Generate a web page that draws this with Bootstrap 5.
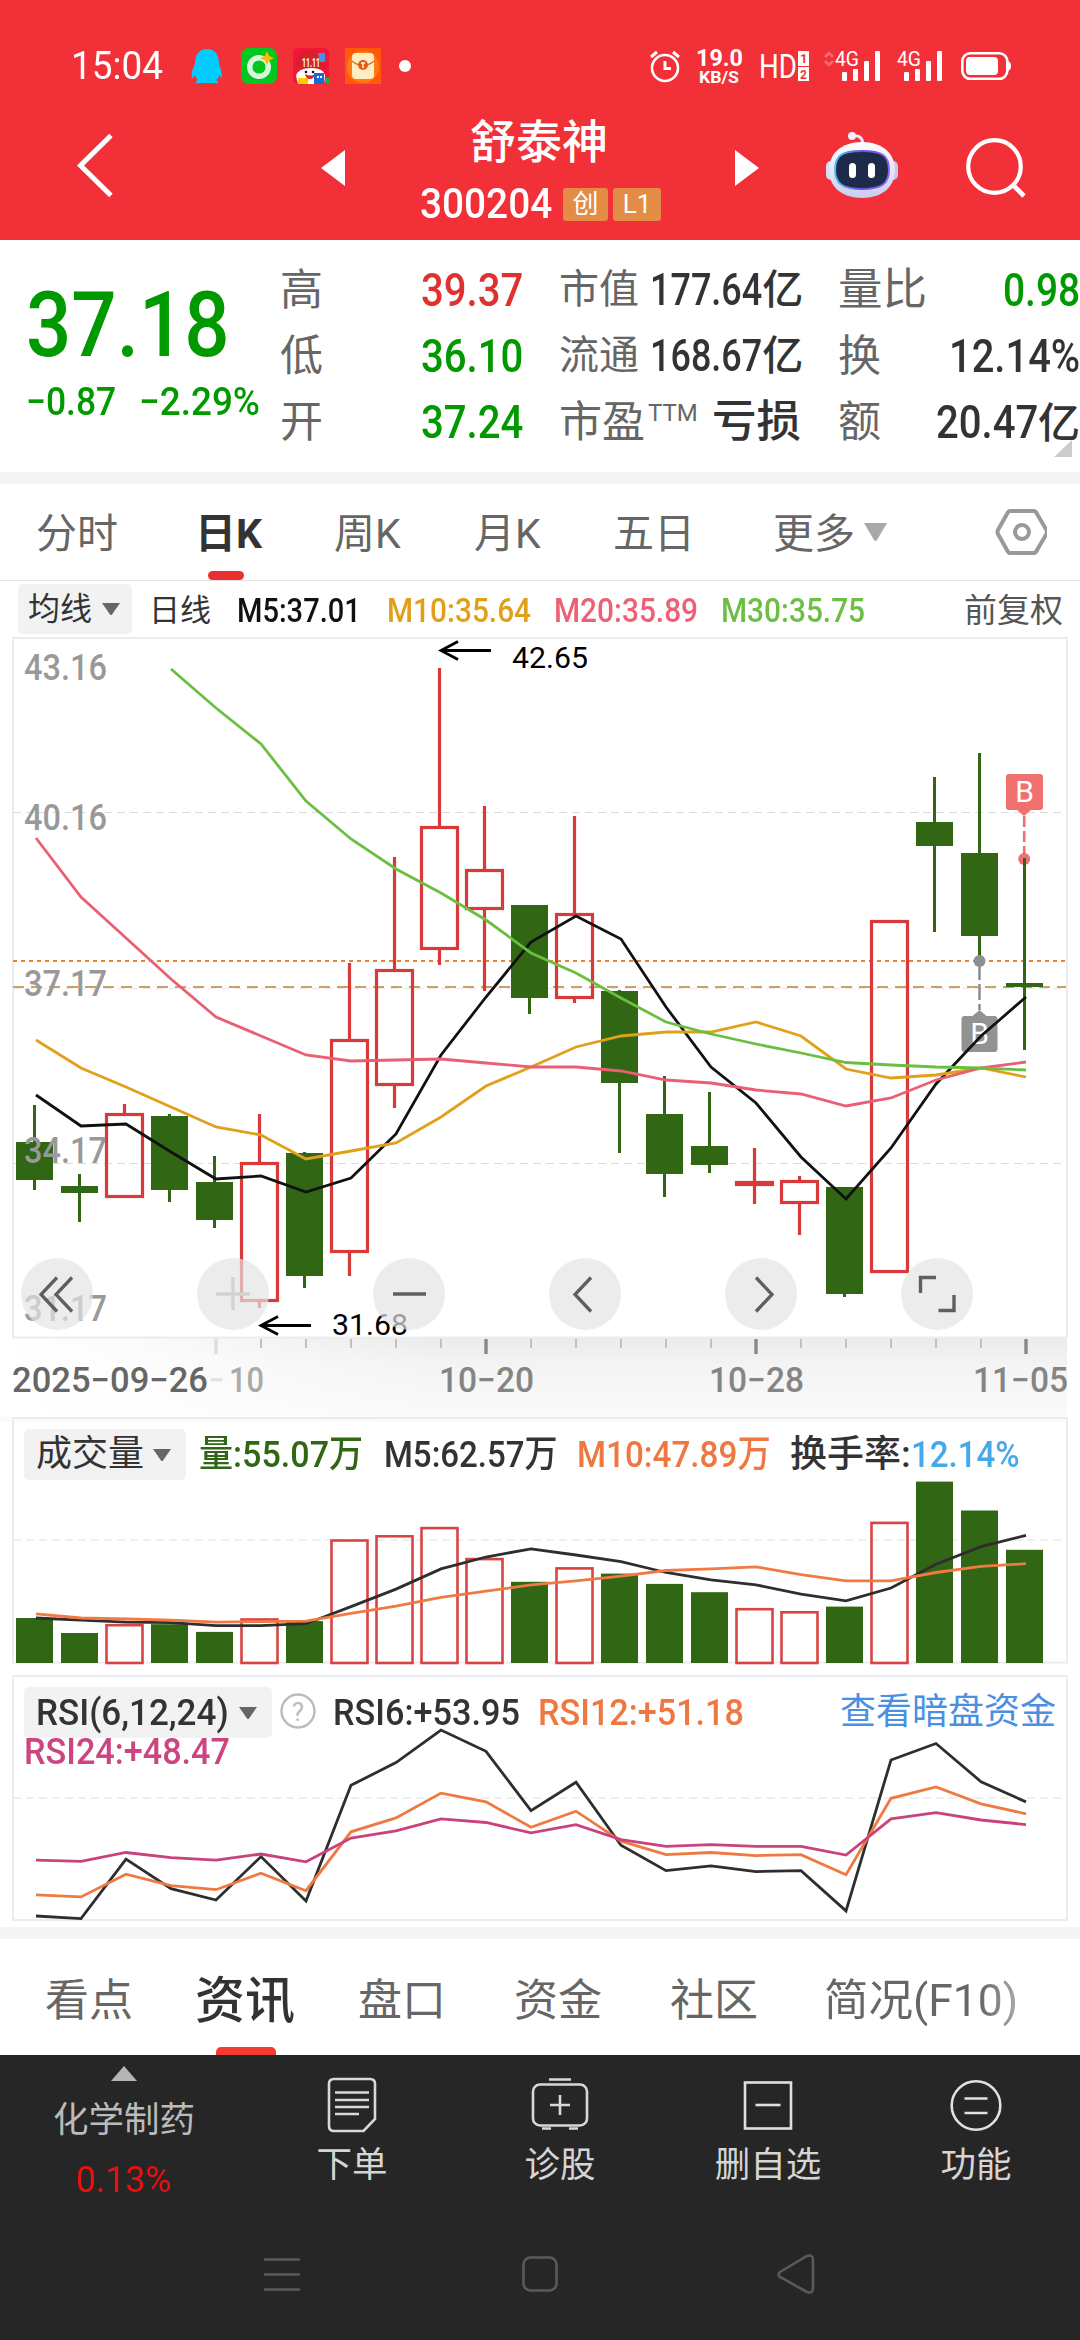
<!DOCTYPE html>
<html lang="zh-CN">
<head>
<meta charset="utf-8">
<meta name="viewport" content="width=device-width, initial-scale=1">
<title>舒泰神 300204</title>
<link href="https://cdn.jsdelivr.net/npm/bootstrap@5.3.0/dist/css/bootstrap.min.css" rel="stylesheet">
<style>
:root{--up:#e03131;--down:#009900;--ink:#333;--muted:#666}
body{width:1080px;height:2340px;overflow:hidden;background:#fff;color:var(--ink);font-family:Roboto,"Noto Sans CJK SC",sans-serif;line-height:1}
svg{display:block;flex:none}
.fit{display:inline-block;white-space:nowrap;transform-origin:0 50%;font-weight:500}
.hd{height:240px;background:#f23038;color:#fff}
.status-bar{height:96px;padding:38px 0 0 71px}
.status-time{font-size:39px;width:120px}
.title-bar{height:144px;display:grid;grid-template-columns:321px 99px 315px 90px 140px 1fr;align-items:start}
.stock-name{font-size:46px;font-weight:500;height:46px;line-height:46px}
.code-line{height:34px;gap:5px}
.code-num{font-size:42px}
.tag{height:33px;line-height:33px;background:#e38c46;border-radius:3px;font-size:26px;text-align:center}
.quote{height:232px;display:grid;grid-template-columns:280px 279px 279px 242px;padding-top:16px}
.last-price{font-size:90px;color:var(--down);height:90px;line-height:90px;margin-top:25px}
.chg{font-size:39px;color:var(--down);height:40px;line-height:40px;margin-top:11px}
.qrow{height:66px;line-height:68px;font-size:43px;color:var(--muted)}
.qrow b{font-weight:500;color:var(--ink)}
.qrow .fit{font-size:46px;color:var(--ink)}
.qrow .g{color:var(--down)} .qrow .r{color:var(--up)}
.band{background:#f4f4f4}
.tabs{height:97px;border-bottom:1px solid #e4e4e4;display:grid;grid-template-columns:159px 139px 140px 139px 160px 90px 132px 1fr;padding-left:36px;font-size:41px;color:var(--muted);line-height:100px}
.tabs .on{color:var(--ink);font-weight:700}
.underbar{position:absolute;height:9px;background:#e83030;border-radius:5px}
.ma-row{height:56px;display:grid;grid-template-columns:131px 90px 149px 167px 167px 242px 1fr;padding-left:18px;font-size:32px;line-height:59px}
.ma-row .fit{font-size:34px}
.pill{background:#f2f2f2;border-radius:5px;color:var(--ink)}
.panel{position:relative}
.overlay-row{position:absolute;left:0;width:1080px}
.round-btn{width:72px;height:72px;border-radius:50%;background:rgba(227,227,227,.69);display:block}
.vol-row{top:12px;height:48px;display:grid;grid-template-columns:175px 186px 192px 212px 1fr;padding-left:24px;font-size:37px;line-height:51px}
.rsi-row{top:16px;height:48px;display:grid;grid-template-columns:256px 53px 204px 303px 1fr;padding-left:24px;font-size:37px;line-height:51px}
.subtabs{height:116px;display:grid;grid-template-columns:150px 163px 156px 155px 155px 1fr;padding-left:45px;font-size:44px;color:var(--muted);line-height:125px}
.subtabs .on{font-size:50px;font-weight:500;color:var(--ink)}
.fade-end{background:linear-gradient(90deg,#666 80%,#aaa);-webkit-background-clip:text;color:transparent}
.dock{background:#262626;height:285px;color:#d5d5d5;font-size:35.500px}
.dock-items{height:175px;display:grid;grid-template-columns:248px 208px 208px 208px 208px}
.dock-items>div{display:flex;flex-direction:column;align-items:center}
.dock-lab{line-height:40px;height:40px}
</style>
</head>
<body>
<header class="hd">
  <div class="status-bar d-flex align-items-start">
    <span class="status-time"><span class="fit" data-w="92" style="font-weight:400;line-height:56px">15:04</span></span>
    <svg width="889" height="56" viewBox="191 38 889 56">
      <path d="M207 49c-9 0-12 7-12 15-3 5-4 11-3 14 1 0 2-1 3-3 0 2 2 4 3 5-4 2-2 4 1 3h15c4 1 6-1 2-3 2-1 3-3 3-5 1 2 3 3 3 3 0-4-1-9-3-14 0-8-3-15-12-15z" fill="#0cf"/>
      <rect x="241" y="48" width="36" height="36" rx="8" fill="#00c81e"/><circle cx="259" cy="67" r="9.3" fill="none" stroke="#d9f7dd" stroke-width="5.4"/><path d="M267 53l1.700 3.500 3.500 1.700-3.500 1.700-1.700 3.500-1.700-3.500-3.500-1.700 3.500-1.700z" fill="#fb0" stroke="#fb0" stroke-width="1.500"/>
      <rect x="293" y="48" width="36" height="36" rx="5" fill="#f5143c"/><path d="M297 59q2-9 14-9 11 0 13 9l2 10h-31z" fill="#d8202c"/><path d="M318 53h7v9h-5z" fill="#4a90e8"/><path d="M296 76q2-8 15-8 13 0 14 8l-1 8h-26z" fill="#fff"/><text x="302" y="67" font-size="12" font-weight="700" fill="#fff" textLength="18" lengthAdjust="spacingAndGlyphs">11.11</text><path d="M305 74q6 3 10 0-1 5-5 5t-5-5z" fill="#e02020"/><circle cx="306" cy="72" r="1.300" fill="#111"/><circle cx="313" cy="72" r="1.300" fill="#111"/><path d="M298 78h10v6h-10z" fill="#fc0"/><path d="M314 73h10v11h-10z" fill="#1769d8"/><path d="M317 76h2v2h-2zM320 76h2v2h-2z" fill="#fff"/><path d="M325 78h4v5h-4z" fill="#20b040"/>
      <rect x="345" y="48" width="36" height="36" fill="#ff5a0a"/><circle cx="363" cy="67" r="16" fill="#ff7a10"/><rect x="352" y="53" width="22" height="26" rx="4" fill="#ffeec2"/><path d="M352 61q11 9 22 0" fill="none" stroke="#d86820" stroke-width="1.400"/><circle cx="363" cy="65" r="5" fill="#e85a10"/><path d="M361 63h4M363 63v5" stroke="#fff" stroke-width="1.600"/>
      <circle cx="405" cy="66" r="6" fill="#fff"/>
      <g fill="none" stroke="#fff" stroke-width="2.600"><circle cx="665" cy="68" r="13"/><path d="M665 61v7.500h6M651 57l6-5M679 57l-6-5" stroke-width="3"/></g>
      <g fill="#fff" font-weight="700"><text x="696" y="66" font-size="24" textLength="47" lengthAdjust="spacingAndGlyphs">19.0</text><text x="699" y="83" font-size="17" textLength="40" lengthAdjust="spacingAndGlyphs">KB/S</text></g>
      <text x="759" y="78" font-size="33" fill="#fff" textLength="38" lengthAdjust="spacingAndGlyphs">HD</text>
      <rect x="798" y="51" width="11" height="15" fill="#fff"/><rect x="798" y="67" width="11" height="14" fill="#fff"/>
      <text x="800" y="63" font-size="13" font-weight="700" fill="#f23038">1</text><text x="800" y="79" font-size="12" font-weight="700" fill="#f23038">2</text>
      <path d="M825 57l4-4 4 4M825 61l4 4 4-4" fill="none" stroke="#f86a70" stroke-width="2.600"/>
      <g fill="#fff"><text x="835" y="65.500" font-size="20" textLength="24" lengthAdjust="spacingAndGlyphs">4G</text><rect x="842" y="72" width="5" height="9" rx="1"/><rect x="853" y="69" width="5" height="12" rx="1"/><rect x="864" y="61" width="5" height="20" rx="1"/><rect x="875" y="51" width="5" height="30" rx="1"/>
      <text x="897" y="65.500" font-size="20" textLength="24" lengthAdjust="spacingAndGlyphs">4G</text><rect x="904" y="72" width="5" height="9" rx="1"/><rect x="915" y="69" width="5" height="12" rx="1"/><rect x="926" y="61" width="5" height="20" rx="1"/><rect x="937" y="51" width="5" height="30" rx="1"/>
      <rect x="966" y="57" width="32" height="18" rx="4"/><path d="M1008 61q3 1 3 5t-3 5z"/></g>
      <rect x="962.300" y="53.300" width="45" height="25.500" rx="8" fill="none" stroke="#fff" stroke-width="2.600"/>
    </svg>
  </div>
  <div class="title-bar">
    <svg width="240" height="120" viewBox="0 96 240 120"><path d="M111 135.500L80.500 165.500l30.500 30" fill="none" stroke="#fff" stroke-width="5"/></svg>
    <svg width="99" height="120" viewBox="321 96 99 120"><path d="M321 168l24-18v36z" fill="#fff"/></svg>
    <div class="d-flex flex-column" style="padding-top:23px">
      <div class="stock-name" style="padding-left:50px">舒泰神</div>
      <div class="code-line d-flex align-items-center" style="margin-top:22px">
        <span style="width:138px"><span class="fit code-num" data-w="132">300204</span></span>
        <span class="tag" style="width:45px">创</span><span class="tag" style="width:48px">L1</span>
      </div>
    </div>
    <svg width="60" height="120" viewBox="735 96 60 120"><path d="M759 168l-24-18v36z" fill="#fff"/></svg>
    <svg width="76" height="120" viewBox="824 96 76 120">
      <defs><linearGradient id="rb" x1="0" y1="0" x2="0" y2="1"><stop offset="0" stop-color="#fff"/><stop offset="1" stop-color="#c9cdf0"/></linearGradient><linearGradient id="rf" x1="0" y1="0" x2="1" y2="0"><stop offset="0" stop-color="#4cc4ee"/><stop offset=".5" stop-color="#6a50e0"/><stop offset="1" stop-color="#8d62f0"/></linearGradient></defs>
      <path d="M851 136q10-2 11 8" fill="none" stroke="#e8e8fa" stroke-width="3"/><circle cx="851" cy="136" r="4" fill="#eeeefb"/>
      <rect x="825" y="161" width="12" height="19" rx="5" fill="#d9dcf5"/><rect x="885" y="161" width="12" height="19" rx="5" fill="#c3c8ee"/>
      <path d="M861 142c21 0 33 12 33 28 0 17-13 28-33 28s-33-11-33-28c0-16 12-28 33-28z" fill="url(#rb)"/>
      <path d="M861 151c21 0 27 5 27 19s-8 19-27 19-27-5-27-19 6-19 27-19z" fill="#1e2a4a" stroke="url(#rf)" stroke-width="2"/>
      <rect x="848" y="163" width="7" height="15" rx="3.500" fill="#fff"/><rect x="867" y="163" width="7" height="15" rx="3.500" fill="#fff"/>
    </svg>
    <svg width="100" height="120" viewBox="965 96 100 120"><g fill="none" stroke="#fff" stroke-width="4.200"><circle cx="994.500" cy="166.500" r="26.300"/><path d="M1013 185l11 11" stroke-width="4.600"/></g></svg>
  </div>
</header>

<section class="quote position-relative">
  <div style="padding-left:26px">
    <div class="last-price"><span class="fit" data-w="204">37.18</span></div>
    <div class="chg d-flex"><span style="width:113px"><span class="fit" data-w="90">−0.87</span></span><span class="fit" data-w="121">−2.29%</span></div>
  </div>
  <div>
    <div class="qrow d-flex"><span style="width:141px">高</span><span class="fit r" data-w="102">39.37</span></div>
    <div class="qrow d-flex"><span style="width:141px">低</span><span class="fit g" data-w="102">36.10</span></div>
    <div class="qrow d-flex"><span style="width:141px">开</span><span class="fit g" data-w="102">37.24</span></div>
  </div>
  <div>
    <div class="qrow d-flex"><span style="width:91px;font-size:40px">市值</span><span class="fit" data-w="112" style="font-size:44px">177.64</span><b style="font-size:41px">亿</b></div>
    <div class="qrow d-flex"><span style="width:91px;font-size:40px">流通</span><span class="fit" data-w="112" style="font-size:44px">168.67</span><b style="font-size:41px">亿</b></div>
    <div class="qrow d-flex"><span style="width:89px">市盈</span><span style="width:64px;font-size:24px;line-height:51px">TTM</span><b style="font-size:44.500px">亏损</b></div>
  </div>
  <div>
    <div class="qrow d-flex justify-content-between"><span style="font-size:44.500px">量比</span><span class="fit g" data-w="77">0.98</span></div>
    <div class="qrow d-flex justify-content-between"><span>换</span><span class="fit" data-w="131">12.14%</span></div>
    <div class="qrow d-flex justify-content-between"><span>额</span><span><span class="fit" data-w="102">20.47</span><b style="font-size:42px">亿</b></span></div>
  </div>
  <svg class="position-absolute" style="right:8px;bottom:15px" width="18" height="17"><path d="M18 0v17H0z" fill="#ccc"/></svg>
</section>
<div class="band" style="height:12px"></div>

<nav class="tabs position-relative">
  <span>分时</span><span class="on">日K</span><span>周K</span><span>月K</span><span>五日</span><span>更多</span>
  <svg width="24" height="96" viewBox="862 484 24 96"><path d="M863 523h23l-10 17q-1.500 2-3 0z" fill="#a8a8a8"/></svg>
  <svg width="52" height="96" viewBox="993 484 52 96"><g fill="none" stroke="#999" stroke-width="4"><path d="M1008.500 511h23q2 0 3 2l10 17q1 2 0 4l-10 17q-1 2-3 2h-23q-2 0-3-2l-9.500-17q-1-2 0-4l9.500-17q1-2 3-2z"/><circle cx="1020" cy="532" r="7"/></g></svg>
  <i class="underbar" style="left:208px;top:87px;width:36px"></i>
</nav>

<div class="ma-row">
  <div class="pill d-flex align-items-center" style="width:114px;height:50px;margin-top:3px;padding-left:10px;line-height:53px">均线<svg style="margin-left:10px" width="18" height="12"><path d="M0 0h18l-8 11.500q-1 1-2 0z" fill="#666"/></svg></div>
  <span style="font-size:31px">日线</span>
  <span class="fit" data-w="124" style="color:#111;margin-left:-2px">M5:37.01</span>
  <span class="fit" data-w="144" style="color:#e0a01a;margin-left:-1px">M10:35.64</span>
  <span class="fit" data-w="144" style="color:#ee6075;margin-left:-1px">M20:35.89</span>
  <span class="fit" data-w="144" style="color:#6dbe45;margin-left:-1px">M30:35.75</span>
  <span style="color:#555;font-size:33px">前复权</span>
</div>

<div class="panel">
  <svg id="kline" width="1080" height="780" viewBox="0 637 1080 780"></svg>
  <div class="overlay-row d-flex" style="top:621px;padding-left:21px;gap:104px">
    <svg class="round-btn" viewBox="-36 -36 72 72"><path d="M0-16.500L-16 .5l16 17M15-16.500L-1 .5l16 17" fill="none" stroke="#5f5f5f" stroke-width="3.300"/></svg>
    <svg class="round-btn" viewBox="-36 -36 72 72"><path d="M-17 0h34M0-17v33" fill="none" stroke="#d2d2d2" stroke-width="3.300"/></svg>
    <svg class="round-btn" viewBox="-36 -36 72 72"><path d="M-16 0h33" fill="none" stroke="#5f5f5f" stroke-width="3.600"/></svg>
    <svg class="round-btn" viewBox="-36 -36 72 72"><path d="M6-16.500L-10 .5l16 17" fill="none" stroke="#5f5f5f" stroke-width="3.300"/></svg>
    <svg class="round-btn" viewBox="-36 -36 72 72"><path d="M-5-16.500L11 .5l-16 17" fill="none" stroke="#5f5f5f" stroke-width="3.300"/></svg>
    <svg class="round-btn" viewBox="-36 -36 72 72"><path d="M-16.500 -1v-15.500h15.500M17 1v15.500h-15.500" fill="none" stroke="#5f5f5f" stroke-width="3.400"/></svg>
  </div>
</div>

<div class="panel">
  <svg id="vol" width="1080" height="254" viewBox="0 1417 1080 254"></svg>
  <div class="overlay-row vol-row">
    <div class="pill d-flex align-items-center" style="width:162px;padding-left:12px;font-size:36px">成交量<svg style="margin-left:9px" width="18" height="12"><path d="M0 0h18l-8 11.500q-1 1-2 0z" fill="#666"/></svg></div>
    <span class="fit" data-w="164" style="color:#306614">量:55.07万</span>
    <span class="fit" data-w="174" style="margin-left:-1px">M5:62.57万</span>
    <span class="fit" data-w="194" style="color:#ef7742;margin-left:0">M10:47.89万</span>
    <span class="d-flex"><span class="fit" data-w="121" style="margin-left:1px">换手率:</span><span class="fit" data-w="109" style="color:#45a8ea">12.14%</span></span>
  </div>
</div>

<div class="panel">
  <svg id="rsi" width="1080" height="256" viewBox="0 1671 1080 256"></svg>
  <div class="overlay-row rsi-row">
    <div class="pill d-flex align-items-center" style="width:248px;padding-left:12px"><span class="fit" data-w="193">RSI(6,12,24)</span><svg style="margin-left:10px" width="18" height="12"><path d="M0 0h18l-8 11.500q-1 1-2 0z" fill="#666"/></svg></div>
    <svg width="36" height="48" viewBox="0 0 36 48"><circle cx="18" cy="24" r="16.500" fill="none" stroke="#bbb" stroke-width="2.400"/><text x="18" y="33.500" text-anchor="middle" font-size="26" fill="#bbb">?</text></svg>
    <span class="fit" data-w="187">RSI6:+53.95</span>
    <span class="fit" data-w="206" style="color:#ef7742;margin-left:1px">RSI12:+51.18</span>
    <span style="color:#4a90e2;font-size:36px">查看暗盘资金</span>
  </div>
  <div class="overlay-row" style="top:58px;padding-left:24px;font-size:37px;line-height:46px;color:#cc4480"><span class="fit" data-w="206">RSI24:+48.47</span></div>
</div>
<div class="band" style="height:12px"></div>

<nav class="subtabs position-relative">
  <span>看点</span><span class="on">资讯</span><span>盘口</span><span>资金</span><span style="padding-left:1px">社区</span><span><span class="fit fade-end" data-w="194" style="font-weight:400">简况(F10)</span></span>
  <i class="underbar" style="left:216px;bottom:0;width:60px;height:8px;background:#f53c32;border-radius:5px 5px 0 0"></i>
</nav>

<footer class="dock">
  <div class="dock-items">
    <div style="color:#bbb"><svg width="26" height="15" style="margin-top:11px"><path d="M13 0l13 15H0z" fill="#b5b5b5"/></svg><span class="dock-lab" style="margin-top:19px">化学制药</span><span class="dock-lab" style="color:#e81010;font-size:36px;margin-top:20px;width:96px"><span class="fit" data-w="96" style="font-weight:400">0.13%</span></span></div>
    <div><svg width="52" height="60" viewBox="0 0 52 60" style="margin-top:20px"><g fill="none" stroke="#d8d8d8" stroke-width="2.600"><path d="M8 4h36q5 0 5 5v35L37.500 56H8q-5 0-5-5V9q0-5 5-5z"/><path d="M9 17.500h34M9 25h34M9 32h34M9 39h24"/></g></svg><span class="dock-lab" style="margin-top:10px">下单</span></div>
    <div><svg width="60" height="60" viewBox="0 0 60 60" style="margin-top:20px"><g fill="none" stroke="#d8d8d8" stroke-width="2.600"><rect x="3" y="9.500" width="54" height="41" rx="7"/><path d="M19 4.500h22M30 20v20M20 30h20M12 53.500h9M39 53.500h9"/></g></svg><span class="dock-lab" style="margin-top:10px">诊股</span></div>
    <div><svg width="60" height="60" viewBox="0 0 60 60" style="margin-top:20px"><g fill="none" stroke="#e0e0e0" stroke-width="2.600"><rect x="7" y="7.500" width="46" height="46"/><path d="M17.500 30h25"/></g></svg><span class="dock-lab" style="margin-top:10px">删自选</span></div>
    <div><svg width="60" height="60" viewBox="0 0 60 60" style="margin-top:20px"><g fill="none" stroke="#e0e0e0" stroke-width="2.600"><circle cx="30" cy="30.500" r="24.300"/><path d="M18.500 23.500h23M18.500 38h23"/></g></svg><span class="dock-lab" style="margin-top:10px">功能</span></div>
  </div>
  <div class="d-flex" style="padding:23px 0 0 264px">
    <svg width="552" height="42" viewBox="264 2253 552 42"><g fill="none" stroke="#5a5a5a" stroke-width="2.600"><path d="M264 2259.500h36M264 2274.500h36M264 2289.500h36"/><rect x="523.500" y="2257.500" width="33" height="33" rx="7"/><path d="M780 2272l27-16q6-2 6 4v28q0 6-6 4l-27-15q-3-2.500 0-5z"/></g></svg>
  </div>
</footer>

<script src="https://cdn.jsdelivr.net/npm/bootstrap@5.3.0/dist/js/bootstrap.bundle.min.js"></script>
<script>
// Condense each numeric label to its set width
document.querySelectorAll('.fit').forEach(function(el){
  el.style.justifySelf='start';
  var w=+el.dataset.w,n=el.offsetWidth;
  el.style.transform='scaleX('+(w/n)+')';
  el.style.marginRight=(w-n)+'px';
});
var X=function(i){return 34.5+45*i}, LX=function(i){return 36+45*i};
// Vertical scale shared by the two indicator panels
var Y=function(v){return +(1400+(v-1400)*1.0331).toFixed(1)};
var G='#306614',R='#d83a3a';
function line(a,c,s,w){return '<polyline fill="none" stroke="'+c+'" stroke-width="'+(w||2.8)+'" points="'+a.map(function(y,i){return LX(i+(s||0))+','+y}).join(' ')+'"/>'}
function txt(x,y,w,t,c,f,b){return '<text x="'+x+'" y="'+y+'" textLength="'+w+'" lengthAdjust="spacingAndGlyphs" fill="'+c+'" font-size="'+f+'" font-weight="'+(b||400)+'">'+t+'</text>'}
function frame(y,h){return '<rect x="13" y="'+y+'" width="1054" height="'+h+'" fill="none" stroke="#ececec" stroke-width="2"/>'}
function hl(y,c,d,w){return '<path d="M13 '+y+'H1066" stroke="'+c+'" stroke-dasharray="'+d+'" stroke-width="'+w+'"/>'}
// kind, high, body top, body bottom, low
var K=[['g',1105,1142,1180,1190],['g',1174,1186,1193,1222],['r',1104,1113,1198,1198],['g',1114,1116,1190,1202],['g',1156,1182,1220,1228],['r',1114,1162,1302,1308],['g',1152,1153,1276,1288],['r',963,1039,1253,1276],['r',857,969,1086,1108],['r',668,826,950,965],['r',806,869,910,991],['g',905,905,998,1014],['r',816,913,999,1003],['g',990,991,1083,1153],['g',1076,1114,1174,1197],['g',1092,1146,1165,1173],['r',1148,1181,1186,1204],['r',1176,1180,1204,1235],['g',1187,1187,1294,1297],['r',920,920,1273,1273],['g',777,822,846,932],['g',753,853,936,961],['g',858,983,987,1050]];
var s='<defs><linearGradient id="ax" x1="0" y1="0" x2="0" y2="1"><stop offset="0" stop-color="#ebebeb"/><stop offset=".35" stop-color="#f4f4f4"/><stop offset="1" stop-color="#fafafa"/></linearGradient><linearGradient id="fl" x1="0" y1="0" x2="1" y2="0"><stop offset="0" stop-color="#fff"/><stop offset=".3" stop-color="#fff" stop-opacity=".8"/><stop offset="1" stop-color="#fff" stop-opacity="0"/></linearGradient></defs>';
s+='<rect x="0" y="1338" width="1067" height="79" fill="url(#ax)"/><rect x="0" y="1338" width="440" height="79" fill="url(#fl)"/>';
s+=frame(638,699.5)+hl(812.5,'#dcdcdc','8 5',1.2)+hl(1163.5,'#dcdcdc','8 5',1.2)+hl(988.5,'#ececec','8 5',1.5);
s+=hl(961,'#e8832e','4 4',2)+hl(987,'#c8a068','11 7',2);
s+='<path d="M1024.200 816v43" stroke="#f07070" stroke-width="2.600" stroke-dasharray="11 4"/><circle cx="1024.200" cy="859" r="6" fill="#ee7070"/>';
K.forEach(function(k,i){var x=X(i);
  if(k[0]=='g')s+='<path d="M'+x+' '+k[1]+'V'+k[4]+'" stroke="'+G+'" stroke-width="3"/><rect x="'+(x-18.5)+'" y="'+k[2]+'" width="37" height="'+(k[3]-k[2])+'" fill="'+G+'"/>';
  else{s+='<path d="M'+x+' '+k[1]+'V'+k[2]+'M'+x+' '+k[3]+'V'+k[4]+'" stroke="'+R+'" stroke-width="3.2"/><rect x="'+(x-18)+'" y="'+(k[2]+1.5)+'" width="36" height="'+(k[3]-k[2]-3)+'" fill="none" stroke="'+R+'" stroke-width="3.2"/>'}
});
[['43.16',680],['40.16',830],['37.17',996],['34.17',1163],['31.17',1321]].forEach(function(l){s+=txt(24,l[1],83,l[0],'#999',36,500)});
s+='<path d="M1009 774h31q3 0 3 3v30q0 3-3 3h-9l-7 6-7-6h-8q-3 0-3-3v-30q0-3 3-3z" fill="#f07070"/><text x="1024.500" y="802" text-anchor="middle" font-size="30" fill="#fff">B</text>';
s+='<path d="M979.500 964v46" stroke="#888" stroke-width="2.400" stroke-dasharray="16 4"/><circle cx="979.500" cy="961" r="6" fill="#8f8f8f"/><path d="M964.500 1016h8l7-6 7 6h8q3 0 3 3v30q0 3-3 3h-30q-3 0-3-3v-30q0-3 3-3z" fill="#929292"/><text x="979.500" y="1044" text-anchor="middle" font-size="30" fill="#fff">B</text>';
s+=line([1095,1126,1124,1152,1179,1176,1192,1178,1134,1055,997,942,916,939,1007,1067,1103,1157,1199,1148,1084,1036,997],'#111');
s+=line([1040,1068,1087,1107,1127,1135,1159,1151,1143,1117,1086,1067,1047,1036,1032,1032,1022,1036,1069,1078,1075,1068,1077],'#e0a01a');
s+=line([838,897,938,979,1017,1036,1055,1061,1060,1059,1063,1067,1067,1071,1080,1083,1090,1094,1106,1098,1080,1068,1062],'#ea5f74');
s+=line([669,708,744,801,839,869,893,920,953,973,998,1022,1034,1044,1053,1062.5,1065,1067,1068,1070],'#6abf40',3);
s+='<path d="M491 650.500H441M458 641.500l-17 9 17 9M311 1325.500h-50M278 1316.500l-17 9 17 9" fill="none" stroke="#000" stroke-width="2.800"/>';
s+=txt(512,668,76,'42.65','#000',30)+txt(332,1335,76,'31.68','#000',30);
for(var i=4;i<23;i++){var m=(i-4)%6==0;s+='<path d="M'+LX(i)+' 1339v'+(m?15:9)+'" stroke="'+(i==4?'#ddd':m?'#888':'#c0c0c0')+'" stroke-width="'+(m?3.4:2)+'"/>'}
s+=txt(12,1392,196,'2025−09−26','#666',35,500)+txt(209,1392,15,'−','#e3e3e3',35,500)+txt(229,1392,35,'10','#aaa',35,500)+txt(439,1392,95,'10−20','#858585',35,500)+txt(709,1392,95,'10−28','#858585',35,500)+txt(973,1392,95,'11−05','#858585',35,500);
document.getElementById('kline').innerHTML=s;
// Volume
s='<rect x="0" y="1417" width="1067" height="5" fill="#fafafa"/>'+frame(1418,244.5)+hl(1540,'#eaeaea','8 5',1.5);
var V=[1611,1625.5,1617,1617,1624.5,1611.5,1614,1535,1531,1523,1553,1576,1562,1568,1578,1586,1601.5,1604.5,1600,1518,1479,1507,1545];
V.forEach(function(v,i){var x=X(i);v=Y(v);
  s+=K[i][0]=='g'?'<rect x="'+(x-18.5)+'" y="'+v+'" width="37" height="'+(1663-v)+'" fill="'+G+'"/>':'<rect x="'+(x-18)+'" y="'+(v+1)+'" width="36" height="'+(1662-v)+'" fill="none" stroke="#d84444" stroke-width="2.6"/>'});
s+=line([1611,1613,1615,1615.5,1618.5,1618.5,1616.5,1600,1583,1563.5,1552,1544,1550,1556.5,1567,1574,1579,1588,1594.5,1582,1559,1542,1531].map(Y),'#2e2e2e');
s+=line([1607,1611,1612,1613,1615,1614.5,1614,1606.5,1599.5,1591,1585,1579,1575,1570.5,1565,1563.5,1561.5,1569,1575,1575,1567,1561,1558.5].map(Y),'#f07a42');
document.getElementById('vol').innerHTML=s;
// RSI
s=frame(1676,244)+hl(1798,'#eaeaea','8 5',1.5);
s+=line([1899.5,1902,1844.5,1873,1884,1842,1885,1773,1751,1719.5,1740,1797.5,1770,1831,1855.5,1851,1856.5,1855.5,1894.5,1748.5,1732.5,1769.5,1789].map(Y),'#2e2e2e');
s+=line([1879,1881,1859,1870,1874,1858,1875,1818,1804.5,1780.5,1789,1813.5,1798,1827,1840,1838,1841,1840,1859.5,1785.5,1774.5,1791,1800.5].map(Y),'#ee7a42');
s+=line([1845.5,1846.5,1838,1843,1845.5,1839.5,1847,1824,1817,1805.5,1809,1819,1811,1825.5,1832,1830.5,1832,1832,1840.5,1805.5,1799.5,1806.5,1811].map(Y),'#c8427c');
document.getElementById('rsi').innerHTML=s;
</script>
</body>
</html>
